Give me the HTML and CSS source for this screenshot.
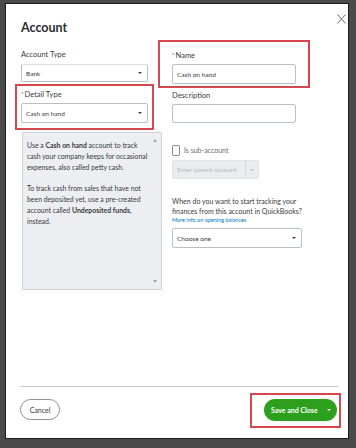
FILE: index.html
```html
<!DOCTYPE html>
<html lang="en">
<head>
    <meta charset="UTF-8">
    <meta name="viewport" content="width=device-width, initial-scale=1.0">
    <title>Account</title>
    <link rel="stylesheet" href="styles.css">
</head>
<body>
    <div class="dialog">
        <!-- header -->
        <div class="dialog-head">
            <h1 class="title">Account</h1>
            <button class="close" aria-label="Close">
                <svg width="9" height="10" viewBox="0 0 9 10"><path d="M0.5 0.5 L8.5 9.5 M8.5 0.5 L0.5 9.5" stroke="#6b6c72" stroke-width="1" fill="none"/></svg>
            </button>
        </div>

        <!-- form -->
        <div class="form">
            <div class="col">
                <div class="label">Account Type</div>
                <div class="select select-bank"><span>Bank</span><span class="caret"></span></div>

                <div class="group mark mark-detail">
                    <div class="label"><span class="req">*</span>Detail Type</div>
                    <div class="select"><span>Cash on hand</span><span class="caret"></span></div>
                </div>

                <div class="help">
                    <p>Use a <b>Cash on hand</b> account to track<br>cash your company keeps for occasional<br>expenses, also called petty cash.</p>
                    <p>To track cash from sales that have not<br>been deposited yet, use a pre-created<br>account called <b>Undeposited funds</b>,<br>instead.</p>
                    <span class="scroll-up"></span>
                    <span class="scroll-down"></span>
                </div>
            </div>

            <div class="col">
                <div class="group mark mark-name">
                    <div class="label"><span class="req">*</span>Name</div>
                    <div class="input">Cash on hand</div>
                </div>

                <div class="label label-desc">Description</div>
                <div class="input input-desc"></div>

                <div class="sub-row">
                    <span class="checkbox"></span>
                    <span>Is sub-account</span>
                </div>
                <div class="select select-parent">
                    <span>Enter parent account</span>
                    <span class="parent-btn"><span class="caret"></span></span>
                </div>

                <p class="question">When do you want to start tracking your finances from this account in QuickBooks?</p>
                <div class="link">More info on opening balances</div>
                <div class="select select-choose"><span>Choose one</span><span class="caret"></span></div>
            </div>
        </div>

        <!-- footer -->
        <div class="dialog-foot">
            <button class="btn-cancel">Cancel</button>
            <div class="mark mark-save">
                <button class="btn-save">Save and Close<span class="caret caret-white"></span></button>
            </div>
        </div>
    </div>
</body>
</html>
```

FILE: styles.css
```css
body {
    margin: 0;
    height: 448px;
    overflow: hidden;
    background-color: #4a4a4a;
    font-family: Lato, "Open Sans", Arial, sans-serif;
    color: #393a3d;
}

.dialog {
    box-sizing: border-box;
    width: 344px;
    height: 436px;
    margin: 3px 0 0 5px;
    background-color: #fff;
    border: 1px solid #1c1c1c;
    display: flex;
    flex-direction: column;
}

.dialog-head {
    display: flex;
    justify-content: space-between;
    align-items: flex-start;
    padding: 10px 2px 0 15px;
}

.title {
    margin: 5px 0 0 0;
    font-size: 12.5px;
    line-height: 18px;
    font-weight: 700;
    color: #2b2c2f;
}

.close {
    margin-top: 0;
    padding: 0;
    width: 9px;
    height: 10px;
    border: none;
    background: none;
    display: flex;
}

.form {
    display: grid;
    grid-template-columns: 127px 130px;
    column-gap: 24px;
    padding: 13px 0 0 15px;
}

.col {
    display: flex;
    flex-direction: column;
    align-items: flex-start;
}

.label {
    font-size: 7.5px;
    line-height: 10px;
    color: #393a3d;
}

.req {
    font-size: 6px;
    margin-right: 1px;
    vertical-align: 1px;
}

.select,
.input {
    box-sizing: border-box;
    display: flex;
    align-items: center;
    justify-content: space-between;
    height: 20px;
    padding: 0 4px;
    border: 1px solid #babec5;
    border-radius: 2px;
    font-size: 6.5px;
    color: #393a3d;
    background-color: #fff;
}

.select {
    width: 127px;
    margin-top: 3px;
}

.select-bank {
    height: 18px;
    margin-top: 4px;
    border-top-color: #dcdde0;
}

.caret {
    width: 0;
    height: 0;
    border-left: 2px solid transparent;
    border-right: 2px solid transparent;
    border-top: 2.5px solid #393a3d;
    margin-right: 1px;
}

.group {
    display: flex;
    flex-direction: column;
}

.mark {
    position: relative;
}

.mark::after {
    content: "";
    position: absolute;
    box-sizing: border-box;
    border: 2px solid #d6474f;
    pointer-events: none;
}

.mark-detail {
    margin-top: 7px;
}

.mark-detail::after {
    top: -5px;
    bottom: -7px;
    left: -6px;
    right: -6px;
}

.mark-name {
    width: 124px;
}

.mark-name::after {
    top: -10px;
    bottom: -4px;
    left: -14px;
    right: -14px;
}

.input {
    width: 124px;
    margin-top: 3px;
}

.label-desc {
    margin-top: 7px;
}

.input-desc {
    height: 19px;
}

.help {
    position: relative;
    box-sizing: border-box;
    width: 140px;
    height: 158px;
    margin-top: 9px;
    margin-left: 1px;
    padding: 7px 6px 0 4px;
    background-color: #eceef1;
    border: 1px solid #cfd1d5;
    font-size: 6.9px;
    line-height: 10.8px;
    color: #393a3d;
    white-space: nowrap;
}

.help p {
    margin: 0 0 10.8px 0;
}

.help b {
    font-weight: 700;
}

.scroll-up,
.scroll-down {
    position: absolute;
    right: 4px;
    width: 0;
    height: 0;
    border-left: 2.5px solid transparent;
    border-right: 2.5px solid transparent;
}

.scroll-up {
    top: 6px;
    border-bottom: 3px solid #a3a5a9;
}

.scroll-down {
    bottom: 6px;
    border-top: 3px solid #a3a5a9;
}

.sub-row {
    display: flex;
    align-items: center;
    gap: 4px;
    margin-top: 22px;
    font-size: 7px;
    line-height: 11px;
    color: #6b6c72;
}

.checkbox {
    box-sizing: border-box;
    width: 8px;
    height: 11px;
    border: 1px solid #8d9096;
    border-radius: 1px;
}

.select-parent {
    width: 87px;
    height: 19px;
    margin-top: 4px;
    padding-right: 0;
    background-color: #ebecee;
    border-color: #e2e3e6;
    color: #b7b9bd;
    font-size: 6.5px;
}

.select-parent .parent-btn {
    align-self: stretch;
    width: 12px;
    display: flex;
    align-items: center;
    justify-content: center;
    border-left: 1px solid #d6d7da;
}

.select-parent .caret {
    border-top-color: #b7b9bd;
    margin: 0;
}

.question {
    margin: 18px 0 0 0;
    font-size: 7px;
    line-height: 9.5px;
    color: #393a3d;
}

.link {
    font-size: 5.5px;
    line-height: 8px;
    color: #0077c5;
}

.select-choose {
    width: 130px;
    margin-top: 4px;
}

.dialog-foot {
    margin: auto 10px 0 14px;
    padding: 12px 1px 17px 0;
    border-top: 1px solid #c9cacd;
    display: flex;
    justify-content: space-between;
    align-items: flex-start;
}

.btn-cancel {
    box-sizing: border-box;
    width: 40px;
    height: 21px;
    padding: 0;
    border: 1px solid #8d9096;
    border-radius: 11px;
    background: #fff;
    font-family: inherit;
    font-size: 7px;
    color: #393a3d;
}

.mark-save::after {
    top: -6px;
    bottom: -7px;
    left: -14px;
    right: -4px;
}

.btn-save {
    box-sizing: border-box;
    width: 73px;
    height: 22px;
    padding: 0 5px 0 7px;
    border: none;
    border-radius: 11px;
    background-color: #2ca01c;
    color: #fff;
    font-family: inherit;
    font-size: 7px;
    font-weight: 700;
    display: flex;
    align-items: center;
    justify-content: space-between;
}

.caret-white {
    border-top-color: #fff;
}
```
